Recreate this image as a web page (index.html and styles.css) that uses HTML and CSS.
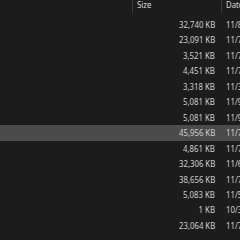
FILE: index.html
```html
<!DOCTYPE html>
<html>
<head>
<meta charset="utf-8">
<link rel="stylesheet" href="styles.css">
</head>
<body>
<div class="pane">
  <div class="header">
    <div class="col-name"></div>
    <div class="col-size"><span class="t">Size</span></div>
    <div class="col-date"><span class="t">Date modified</span></div>
  </div>
  <div class="rows">
    <div class="row"><div class="col-name"></div><div class="col-size"><span class="t">32,740 KB</span></div><div class="col-date"><span class="t">11/8/2023 3:12 PM</span></div></div>
    <div class="row"><div class="col-name"></div><div class="col-size"><span class="t">23,091 KB</span></div><div class="col-date"><span class="t">11/7/2023 2:40 PM</span></div></div>
    <div class="row"><div class="col-name"></div><div class="col-size"><span class="t">3,521 KB</span></div><div class="col-date"><span class="t">11/7/2023 1:05 PM</span></div></div>
    <div class="row"><div class="col-name"></div><div class="col-size"><span class="t">4,451 KB</span></div><div class="col-date"><span class="t">11/7/2023 9:21 AM</span></div></div>
    <div class="row"><div class="col-name"></div><div class="col-size"><span class="t">3,318 KB</span></div><div class="col-date"><span class="t">11/3/2023 4:18 PM</span></div></div>
    <div class="row"><div class="col-name"></div><div class="col-size"><span class="t">5,081 KB</span></div><div class="col-date"><span class="t">11/9/2023 10:02 AM</span></div></div>
    <div class="row"><div class="col-name"></div><div class="col-size"><span class="t">5,081 KB</span></div><div class="col-date"><span class="t">11/9/2023 10:03 AM</span></div></div>
    <div class="row selected"><div class="col-name"></div><div class="col-size"><span class="t">45,956 KB</span></div><div class="col-date"><span class="t">11/7/2023 5:44 PM</span></div></div>
    <div class="row"><div class="col-name"></div><div class="col-size"><span class="t">4,861 KB</span></div><div class="col-date"><span class="t">11/7/2023 11:30 AM</span></div></div>
    <div class="row"><div class="col-name"></div><div class="col-size"><span class="t">32,306 KB</span></div><div class="col-date"><span class="t">11/6/2023 8:15 PM</span></div></div>
    <div class="row"><div class="col-name"></div><div class="col-size"><span class="t">38,656 KB</span></div><div class="col-date"><span class="t">11/7/2023 6:50 PM</span></div></div>
    <div class="row"><div class="col-name"></div><div class="col-size"><span class="t">5,083 KB</span></div><div class="col-date"><span class="t">11/5/2023 2:27 PM</span></div></div>
    <div class="row"><div class="col-name"></div><div class="col-size"><span class="t">1 KB</span></div><div class="col-date"><span class="t">10/3/2023 7:09 AM</span></div></div>
    <div class="row"><div class="col-name"></div><div class="col-size"><span class="t">23,064 KB</span></div><div class="col-date"><span class="t">11/7/2023 12:48 PM</span></div></div>
  </div>
</div>
</body>
</html>
```

FILE: styles.css
```css
html, body {
  margin: 0;
  padding: 0;
  background: #1c1c1c;
  overflow: hidden;
}
.pane {
  width: 240px;
  height: 240px;
  overflow: hidden;
  font-family: "Noto Sans", "Open Sans", sans-serif;
  font-size: 9.5px;
  color: #cfcfcf;
}
.t {
  display: inline-block;
  transform: scaleX(0.82);
  transform-origin: left center;
}
.header, .row {
  display: grid;
  grid-template-columns: 132px 89px 1fr;
  white-space: nowrap;
}
.header {
  height: 17px;
}
.header .col-size, .header .col-date {
  border-left: 1px solid #3a3a3a;
  height: 13px;
  line-height: 10px;
  padding-left: 4px;
  color: #dadada;
}
.rows {
  display: flex;
  flex-direction: column;
}
.row {
  height: 15.46px;
  line-height: 15.46px;
}
.row .col-size {
  text-align: right;
  padding-right: 6px;
}
.row .col-size .t {
  transform-origin: right center;
}
.row .col-date {
  padding-left: 5px;
  overflow: hidden;
}
.row.selected {
  background: #4b4b4b;
}
```
